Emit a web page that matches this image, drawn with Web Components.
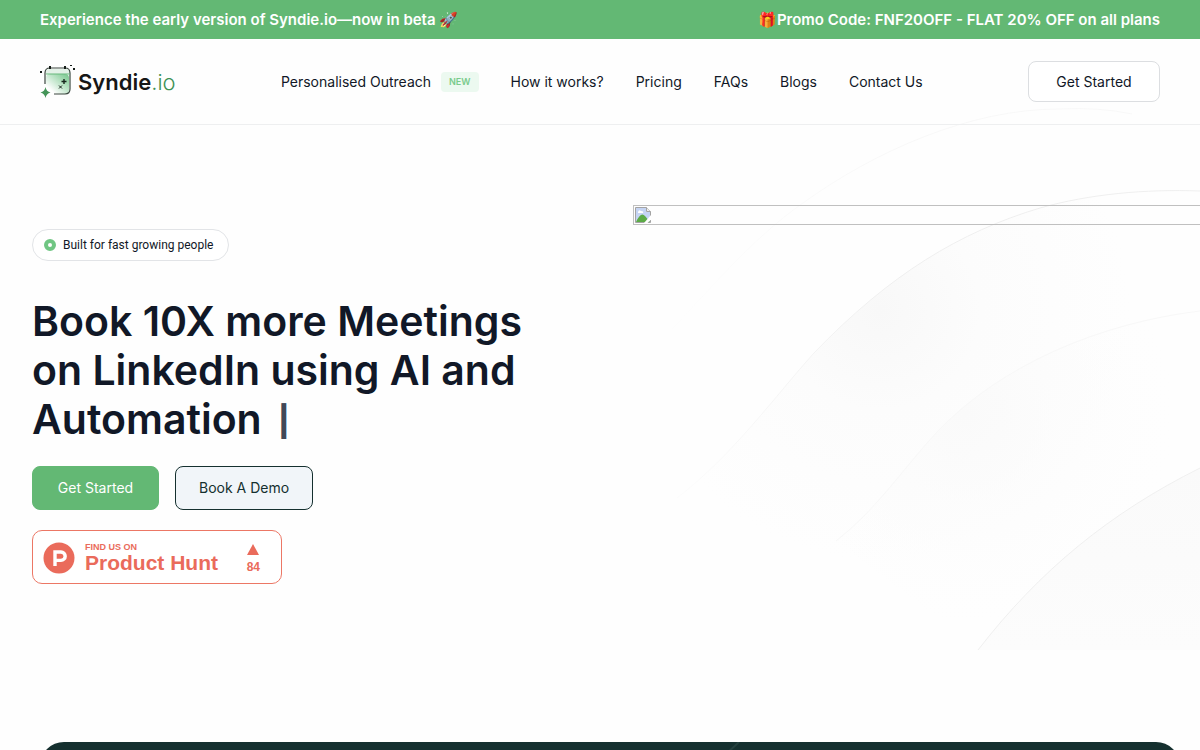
<!DOCTYPE html>
<html lang="en">
<head>
<meta charset="utf-8">
<meta name="viewport" content="width=device-width, initial-scale=1">
<title>Syndie.io</title>
<style>
  body { margin: 0; background: #fefefe; color: #111827; font-family: Inter, "Open Sans", sans-serif; overflow-x: hidden; }
</style>
</head>
<body>
<syndie-page></syndie-page>
<script>
const define = (name, html) => customElements.define(name, class extends HTMLElement {
  constructor() {
    super();
    const template = document.createElement('template');
    template.innerHTML = '<style>*{box-sizing:border-box}</style>' + html;
    this.attachShadow({ mode: 'open' }).append(template.content.cloneNode(true));
  }
});

define('promo-bar', `
<style>
  :host { display: flex; justify-content: space-between; align-items: center; min-height: 39px; padding: 0 40px; background: #63b874; color: #fff; font-size: 15px; font-weight: 600; line-height: 20px; }
</style>
<slot></slot>`);

define('syndie-logo', `
<style>
  :host { display: block; }
  a { display: flex; align-items: center; gap: 2px; color: #161616; text-decoration: none; font-size: 22px; line-height: 32px; font-weight: 600; }
  span { font-weight: 300; color: #3f9155; }
  svg { display: block; }
</style>
<a href="#">
  <svg width="36" height="34" viewBox="0 0 36 34" aria-hidden="true">
    <defs><linearGradient id="g" x1="0" y1="1" x2="1" y2="0"><stop offset=".2" stop-color="#fff"/><stop offset="1" stop-color="#74c68a"/></linearGradient></defs>
    <rect x="6" y="9" width="23" height="20" rx="4" fill="url(#g)"/>
    <path d="M6 9V6l3-2h18l3 2v3z" fill="#e3f1e7"/>
    <path d="M5 19V8q0-5 5-5h15q5 0 5 5v16q0 5-5 5H14" fill="none" stroke="#3a473f" stroke-width="1.200"/>
    <path d="M6 9h24" stroke="#69b97d" stroke-width="1"/>
    <path d="M9 1h2v3H9zM24 1h2v3h-2zM0 6h2v2H0zM30 0h2v1h-2zM33 3h2v2h-2z" fill="#151c18"/>
    <path d="M24 14v5M21.500 16.500h5" stroke="#17251c" stroke-width="1.400"/>
    <path d="M19 20.500l3 3M22 20.500l-3 3" stroke="#17251c" stroke-width="1"/>
    <path d="M5.500 22q.8 4.500 5 5.500q-4.200 1-5 5.500q-.8-4.500-5-5.500q4.200-1 5-5.500z" fill="#459559"/>
  </svg>
  <div>Syndie<span>.io</span></div>
</a>`);

define('nav-link', `
<style>
  :host { display: flex; align-items: center; gap: 10px; }
  a { color: #111827; text-decoration: none; font-size: 14px; font-weight: 400; line-height: 20px; white-space: nowrap; }
</style>
<a href="#"><slot></slot></a><slot name="badge"></slot>`);

define('new-badge', `
<style>
  :host { display: block; padding: 0 8px; border-radius: 4px; background: #ecf9f0; color: #7acb8c; font-size: 9px; font-weight: 600; line-height: 20px; }
</style>
<slot></slot>`);

define('site-button', `
<style>
  :host { display: block; }
  button { display: block; width: 100%; min-height: 41px; padding: 0 23px; border: 1px solid #dcdee1; border-radius: 8px; background: #fff; color: #111827; font: 400 14px/20px Inter, sans-serif; white-space: nowrap; cursor: pointer; }
  :host([kind=primary]) button, :host([kind=secondary]) button { min-height: 44px; }
  :host([kind=primary]) button { background: #63b874; border-color: #63b874; color: #fff; }
  :host([kind=secondary]) button { background: #f1f5f9; border-color: #15302f; color: #15302f; }
</style>
<button type="button"><slot></slot></button>`);

define('site-header', `
<style>
  :host { display: flex; align-items: center; justify-content: space-between; min-height: 86px; padding: 0 40px; border-bottom: 1px solid #eeeff0; }
  nav { display: flex; gap: 32px; }
  site-button { min-width: 132px; }
</style>
<syndie-logo></syndie-logo>
<nav>
  <nav-link>Personalised Outreach<new-badge slot="badge">NEW</new-badge></nav-link>
  <nav-link>How it works?</nav-link>
  <nav-link>Pricing</nav-link>
  <nav-link>FAQs</nav-link>
  <nav-link>Blogs</nav-link>
  <nav-link>Contact Us</nav-link>
</nav>
<site-button>Get Started</site-button>`);

define('hero-pill', `
<style>
  :host { display: inline-flex; align-items: center; gap: 7px; padding: 5px 15px 5px 11px; border: 1px solid #e2e4e7; border-radius: 16px; background: #fff; font: 400 12px/20px Roboto, sans-serif; }
  i { width: 12px; height: 12px; border: 4px solid #70c683; border-radius: 50%; }
</style>
<i></i><slot></slot>`);

define('product-hunt', `
<style>
  :host { display: block; width: 250px; }
  a { display: flex; align-items: center; gap: 10px; height: 54px; padding: 2px 21px 0 10px; border: 1px solid #ec7765; border-radius: 10px; background: #fff; color: #ea6b5b; text-decoration: none; font-family: "Liberation Sans", sans-serif; font-weight: 700; }
  .name { flex: 1; }
  small { display: block; font-size: 9px; line-height: 10px; }
  strong { display: block; font-size: 21px; line-height: 22px; white-space: nowrap; }
  .votes { display: flex; flex-direction: column; align-items: center; gap: 6px; font-size: 12px; line-height: 12px; }
  svg { display: block; }
</style>
<a href="#">
  <svg width="32" height="32" viewBox="0 0 32 32" aria-hidden="true"><circle cx="16" cy="16" r="15.500" fill="#ea6b5b"/><path d="M12 24V10h6a4.200 4.200 0 0 1 0 8.400h-6" fill="none" stroke="#fff" stroke-width="3.400"/></svg>
  <div class="name"><small>FIND US ON</small><strong>Product Hunt</strong></div>
  <div class="votes"><svg width="12" height="11" viewBox="0 0 12 11" aria-hidden="true"><path d="M6 0l6 11H0z" fill="#ea6b5b"/></svg>84</div>
</a>`);

define('missing-picture', `
<style>
  :host { display: block; height: 20px; padding: 1px; border: 1px solid #c0c0c0; border-right: 0; }
  svg { display: block; }
</style>
<svg width="16" height="16" viewBox="0 0 16 16" role="img" aria-label="Hero picture">
  <path d="M.5.500h11l4 4v11H.5z" fill="#fff" stroke="#a3a3a3"/>
  <path d="M1 1h10v4h4v10H1z" fill="#c5d4f3"/>
  <path d="M1 15q5-11 9-6l5 6z" fill="#5cab46"/>
  <path d="M3 5q1-3 3-1q3 0 2 2H3z" fill="#fff"/>
  <path d="M11.500.500v4h4" fill="#eee" stroke="#a3a3a3"/>
  <path d="M16 8L9 16H12.500l3.500-3.500z" fill="#fff"/>
</svg>`);

define('arc-backdrop', `
<style>
  :host { position: absolute; top: 100px; right: 0; z-index: -1; pointer-events: none; }
  svg { display: block; }
</style>
<svg width="600" height="560" viewBox="600 100 600 560" fill="none" aria-hidden="true">
  <defs>
    <radialGradient id="b" gradientUnits="userSpaceOnUse" cx="880" cy="310" r="250"><stop stop-color="#f8f8f8"/><stop offset=".4" stop-color="#fcfcfc"/><stop offset="1" stop-color="#fefefe"/></radialGradient>
    <radialGradient id="c" gradientUnits="userSpaceOnUse" cx="965" cy="415" r="210"><stop stop-color="#fafafa"/><stop offset="1" stop-color="#fdfdfd" stop-opacity="0"/></radialGradient>
    <linearGradient id="d" x1="0" y1="0" x2="0" y2="1"><stop stop-color="#fafafa"/><stop offset="1" stop-color="#fcfcfc"/></linearGradient>
    <linearGradient id="s" gradientUnits="userSpaceOnUse" x1="680" y1="500" x2="900" y2="290"><stop stop-color="#fcfcfc"/><stop offset="1" stop-color="#efefef"/></linearGradient>
    <linearGradient id="t" gradientUnits="userSpaceOnUse" x1="657" y1="345" x2="900" y2="150"><stop stop-color="#fefefe"/><stop offset="1" stop-color="#f8f8f8"/></linearGradient>
  </defs>
  <path d="M677 498C733 455 776 395 814 353C890 274 960 232 1040 208C1090 194 1145 189 1200 191V600H900z" fill="url(#b)"/>
  <path d="M836 541C876 510 902 470 936 433C1000 365 1100 323 1200 311V620H940z" fill="url(#c)"/>
  <path d="M978 650C1040 570 1110 513 1200 468V650z" fill="url(#d)"/>
  <path d="M657 345C710 290 750 240 803 203C875 151 970 109 1059 109Q1100 107 1132 114" stroke="url(#t)"/>
  <path d="M677 498C733 455 776 395 814 353C890 274 960 232 1040 208C1090 194 1145 189 1200 191" stroke="url(#s)"/>
  <path d="M836 541C876 510 902 470 936 433C1000 365 1100 323 1200 311" stroke="#f8f8f8"/>
  <path d="M978 650C1040 570 1110 513 1200 468" stroke="#f0f0f0"/>
</svg>`);

define('hero-section', `
<style>
  :host { display: grid; grid-template-columns: 1fr 1fr; min-height: 617px; }
  .copy { padding: 104px 0 0 32px; }
  .visual { padding: 80px 0 0 33px; }
  h1 { margin: 36px 0 22px; font-size: 41px; font-weight: 600; line-height: 49px; }
  .line { display: block; white-space: nowrap; }
  .caret { padding-left: 6px; color: #414857; font-size: 30px; line-height: 30px; font-weight: 800; vertical-align: 2px; }
  .actions { display: flex; gap: 16px; margin-bottom: 20px; }
  .start { min-width: 127px; }
  .demo { min-width: 138px; }
</style>
<div class="copy">
  <hero-pill>Built for fast growing people</hero-pill>
  <h1><span class="line">Book 10X more Meetings</span><span class="line">on LinkedIn using AI and</span><span class="line">Automation <span class="caret">|</span></span></h1>
  <div class="actions"><site-button class="start" kind="primary">Get Started</site-button><site-button class="demo" kind="secondary">Book A Demo</site-button></div>
  <product-hunt></product-hunt>
</div>
<div class="visual"><missing-picture></missing-picture></div>`);

define('dark-panel', `
<style>
  :host { display: block; margin: 0 20px 0 40px; min-height: 320px; border-radius: 24px; background: #15302f; }
  svg { display: block; margin-left: 60%; }
</style>
<svg width="20" height="14" viewBox="0 0 20 14" aria-hidden="true"><path d="M0 14L15 0" stroke="#24403e" stroke-width="2"/></svg>
<slot></slot>`);

define('syndie-page', `
<style>
  :host { display: block; position: relative; z-index: 0; height: 100vh; overflow: hidden; }
</style>
<arc-backdrop></arc-backdrop>
<promo-bar><span>Experience the early version of Syndie.io—now in beta 🚀</span><span>🎁Promo Code: FNF20OFF - FLAT 20% OFF on all plans</span></promo-bar>
<site-header></site-header>
<hero-section></hero-section>
<dark-panel></dark-panel>`);
</script>
</body>
</html>
